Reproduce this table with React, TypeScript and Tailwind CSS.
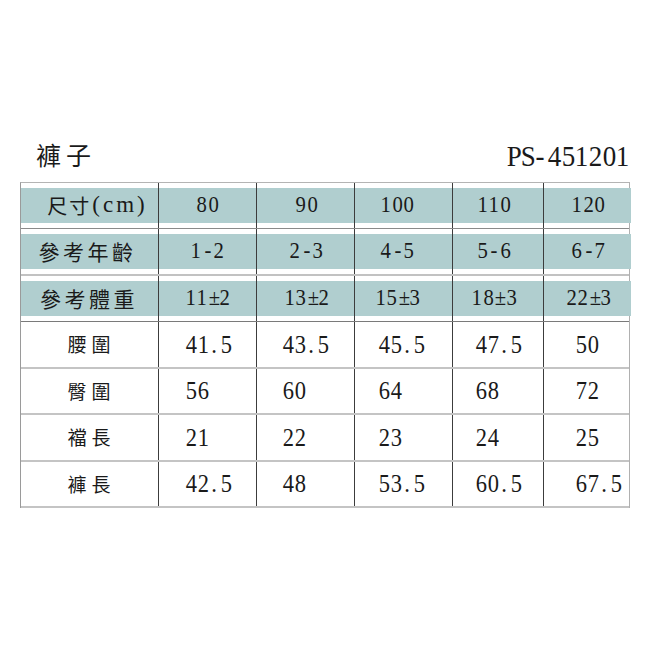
import React from "react";

const COLS = "grid grid-cols-[137px_98px_98px_98px_91px_88px]";

function Mono({ text, cw, className = "" }: { text: string; cw: string; className?: string }) {
  return (
    <span className={`inline-flex font-['Liberation_Serif'] ${className}`}>
      {text.split("").map((c, i) => (
        <span key={i} className={`inline-block text-center ${cw}`}>
          <span className="inline-block scale-x-[0.9]">{c}</span>
        </span>
      ))}
    </span>
  );
}

const headerRows = [
  { vals: ["80", "90", "100", "110", "120"] },
  { vals: ["1-2", "2-3", "4-5", "5-6", "6-7"] },
  { vals: ["11±2", "13±2", "15±3", "18±3", "22±3"] },
];

const dataRows = [
  { label: "腰圍", vals: ["41.5", "43.5", "45.5", "47.5", "50"] },
  { label: "臀圍", vals: ["56", "60", "64", "68", "72"] },
  { label: "襠長", vals: ["21", "22", "23", "24", "25"] },
  { label: "褲長", vals: ["42.5", "48", "53.5", "60.5", "67.5"] },
];

const headerValPad = ["", "pl-[2px]", "pr-[12px]", "pr-[8px]", "pl-[2px]"];
const dataValPad = ["pl-[26px]", "pl-[25px]", "pl-[23px]", "pl-[22px]", "pl-[31px]"];

function HeaderLabel({ idx }: { idx: number }) {
  if (idx === 0) {
    return (
      <div className="h-full bg-[#b0cecf] flex items-center justify-center pl-[16px]">
        <span className="font-['Noto_Sans_CJK_TC'] text-[20px] tracking-[2px] text-[#1a1a1a]">尺寸</span>
        <span className="font-['Liberation_Serif'] text-[23px] tracking-[3px] text-[#1a1a1a] ml-[1px]">(cm)</span>
      </div>
    );
  }
  const t = idx === 1 ? "參考年齡" : "參考體重";
  return (
    <div className={`h-full bg-[#b0cecf] flex items-center justify-center ${idx === 1 ? "pr-[4px]" : "pr-[1px]"}`}>
      <span className="font-['Noto_Sans_CJK_TC'] text-[21px] tracking-[3.5px] text-[#1a1a1a]">{t}</span>
    </div>
  );
}

export default function App() {
  const rowBorders = [
    "h-[46px] border-b border-[#8a8a8a]",
    "h-[47px] border-b-2 border-[#c2c2c2]",
    "h-[46px] border-b border-[#7a7a7a]",
  ];
  return (
    <div className="w-[650px] h-[650px] bg-white text-[#1a1a1a] font-['Liberation_Serif']">
      <div className="pt-[139px] px-[20px]">
        <div className="h-[32px] flex items-center justify-between mb-[11px]">
          <span className="font-['Noto_Sans_CJK_TC'] text-[25px] tracking-[5px] pl-[16px]">褲子</span>
          <Mono text="PS-451201" cw="w-[13.7px]" className="text-[30px] pr-[1px]" />
        </div>
        <div className="w-[610px] border-t border-t-[#b4b4b4] border-l border-l-[#9a9a9a] border-r border-r-[#b0b0b0]">
          {headerRows.map((r, ri) => (
            <div key={ri} className={`${COLS} ${rowBorders[ri]}`}>
              <div className="py-[5px]">
                <HeaderLabel idx={ri} />
              </div>
              {r.vals.map((v, vi) => (
                <div key={vi} className="py-[5px] border-l border-[#3c3c3c]">
                  <div className={`h-full bg-[#b0cecf] flex items-center justify-center ${headerValPad[vi]}`}>
                    <Mono text={v} cw="w-[11.5px]" className="text-[23px]" />
                  </div>
                </div>
              ))}
            </div>
          ))}
          {dataRows.map((r, ri) => (
            <div key={ri} className={`${COLS} h-[46.5px] border-b-2 border-[#c4c4c4]`}>
              <div className="flex items-center justify-center pl-[4px]">
                <span className="font-['Noto_Sans_CJK_TC'] text-[19px] tracking-[5px]">{r.label}</span>
              </div>
              {r.vals.map((v, vi) => (
                <div key={vi} className={`border-l border-[#3c3c3c] flex items-center ${dataValPad[vi]}`}>
                  <Mono text={v} cw="w-[11.75px]" className="text-[25px]" />
                </div>
              ))}
            </div>
          ))}
        </div>
      </div>
    </div>
  );
}
